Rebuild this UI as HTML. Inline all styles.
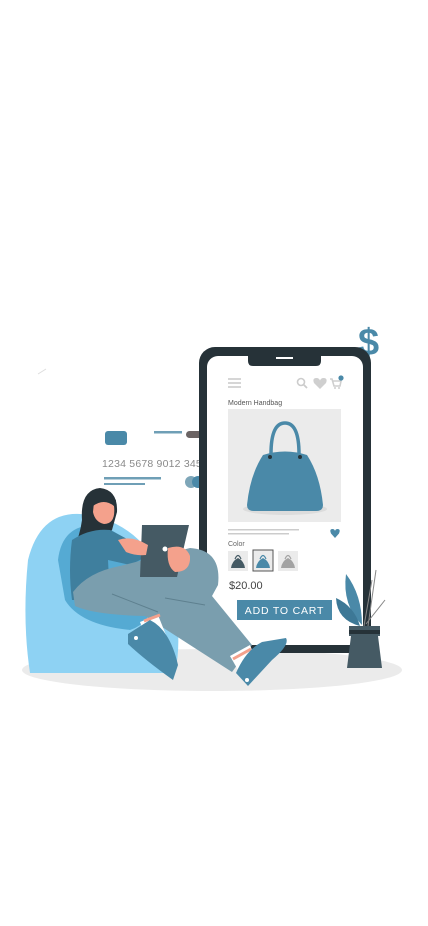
<!DOCTYPE html>
<html><head><meta charset="utf-8"><style>
html,body{margin:0;padding:0;background:#fff;width:428px;height:926px;overflow:hidden}
svg{display:block}
text{font-family:"Liberation Sans",sans-serif}
</style></head><body>
<svg width="428" height="926" viewBox="0 0 428 926" xmlns="http://www.w3.org/2000/svg">
<ellipse cx="212" cy="670" rx="190" ry="21" fill="#ebebeb"/>
<path d="M38 374 L46 369" stroke="#ddd" stroke-width="1"/>
<rect x="105" y="431" width="22" height="14" rx="3" fill="#4a89a8"/>
<rect x="154" y="431" width="28" height="2.5" fill="#6f9fb6"/>
<rect x="186" y="431" width="16" height="7" rx="3.5" fill="#6b6464"/>
<text x="102" y="467" font-size="10.5" fill="#8a8a8a" letter-spacing="0.2">1234  5678  9012  345</text>
<rect x="104" y="477" width="57" height="2.5" fill="#6f9fb6"/>
<rect x="104" y="483" width="41" height="2" fill="#6f9fb6"/>
<circle cx="191" cy="482" r="6" fill="#7ea6b8"/>
<circle cx="198" cy="482" r="6" fill="#4a89a8"/>
<text x="358" y="355" font-size="38" font-weight="bold" fill="#4a89a8">$</text>
<rect x="199" y="347" width="172" height="306" rx="16" fill="#263238"/>
<rect x="207" y="356" width="156" height="289" rx="11" fill="#fff"/>
<path d="M248 353 H321 V361 Q321 366 316 366 H253 Q248 366 248 361 Z" fill="#263238"/>
<rect x="276" y="357" width="17" height="2" fill="#fff"/>
<g fill="#d6d6d6"><rect x="228" y="378" width="13" height="2"/><rect x="228" y="382" width="13" height="2"/><rect x="228" y="386" width="13" height="2"/></g>
<circle cx="301" cy="382" r="3.5" fill="none" stroke="#ccc" stroke-width="1.6"/>
<path d="M303.5 384.5 L307 388" stroke="#ccc" stroke-width="1.8"/>
<path d="M320 389 L314 383 Q312 378 316.5 378 Q319 378 320 380.5 Q321 378 323.5 378 Q328 378 326 383 Z" fill="#cfcfcf"/>
<path d="M330 379 H332 L334 386 H340 L341 381 H333" fill="none" stroke="#cfcfcf" stroke-width="1.6"/>
<circle cx="335" cy="388" r="1" fill="#cfcfcf"/><circle cx="339" cy="388" r="1" fill="#cfcfcf"/>
<circle cx="341" cy="378" r="2.6" fill="#4a89a8"/>
<text x="228" y="405" font-size="7" fill="#555">Modern Handbag</text>
<rect x="228" y="409" width="113" height="113" fill="#ebebeb"/>
<ellipse cx="285" cy="509" rx="42" ry="6" fill="#dcdcdc"/>
<path d="M271 454 Q271 423 285 423 Q299 423 299 454" fill="none" stroke="#4a89a8" stroke-width="3.5"/>
<path d="M263 455 Q285 448 307 455 Q320 475 323 505 Q323 511 316 511 H254 Q247 511 247 505 Q250 475 263 455 Z" fill="#4a89a8"/>
<circle cx="270" cy="457" r="2" fill="#263238"/><circle cx="300" cy="457" r="2" fill="#263238"/>
<rect x="228" y="529" width="71" height="1.5" fill="#ccc"/>
<rect x="228" y="533" width="61" height="1.5" fill="#ccc"/>
<path d="M335 538 L331 533.5 Q329 529 332.5 529 Q334.5 529 335 531 Q335.5 529 337.5 529 Q341 529 339 533.5 Z" fill="#4a89a8"/>
<text x="228" y="546" font-size="7" fill="#666">Color</text>
<rect x="228" y="551" width="20" height="20" fill="#ebebeb"/>
<rect x="253" y="550" width="20" height="21" fill="#ebebeb" stroke="#555" stroke-width="1"/>
<rect x="278" y="551" width="20" height="20" fill="#ebebeb"/>
<path d="M231 568 Q232 561 238 558 Q244 561 245 568 Z" fill="#455a64"/>
<path d="M235 559 Q238 552 241 559" fill="none" stroke="#455a64" stroke-width="1.2"/>
<path d="M256 568 Q257 561 263 558 Q269 561 270 568 Z" fill="#4a89a8"/>
<path d="M260 559 Q263 552 266 559" fill="none" stroke="#4a89a8" stroke-width="1.2"/>
<path d="M281 568 Q282 561 288 558 Q294 561 295 568 Z" fill="#a3a3a3"/>
<path d="M285 559 Q288 552 291 559" fill="none" stroke="#a3a3a3" stroke-width="1.2"/>
<text x="229" y="589" font-size="11" fill="#444">$20.00</text>
<rect x="237" y="600" width="95" height="20" fill="#4a89a8"/>
<text x="284.5" y="614" font-size="10.5" fill="#fff" text-anchor="middle" letter-spacing="0.8">ADD TO CART</text>
<path d="M362 625 Q342 605 346 574 Q362 595 362 625 Z" fill="#4a89a8"/>
<path d="M360 626 Q337 620 336 598 Q354 606 360 626 Z" fill="#3d7896"/>
<path d="M364 626 L372 580 M366 624 L385 600 M368 626 L376 570" stroke="#888" stroke-width="1"/>
<path d="M349 626 H380 V636 H349 Z" fill="#455a64"/>
<rect x="349" y="630" width="31" height="4" fill="#263238"/>
<path d="M351 636 H378 L382 668 H347 Z" fill="#455a64"/>
<!-- beanbag -->
<path d="M28 560 Q40 512 80 514 Q140 520 165 580 Q185 625 175 673 H30 Q22 620 28 560 Z" fill="#8ed2f3"/>
<path d="M58 560 Q62 525 95 525 Q130 530 150 580 Q160 620 130 630 Q80 625 65 600 Z" fill="#55aad3"/>
<!-- woman hair -->
<path d="M82 520 Q80 490 100 488 Q118 490 117 512 L112 530 Q95 545 74 548 Q80 535 82 520 Z" fill="#263238"/>
<path d="M94 502 Q110 497 114 506 Q116 524 104 524 Q95 522 93 512 Z" fill="#f4a18c"/>
<path d="M92 500 Q104 490 116 500 L114 506 Q104 498 93 506 Z" fill="#263238"/>
<!-- shirt -->
<path d="M72 540 Q90 528 110 530 Q140 545 150 555 L130 565 L108 560 L110 600 L72 600 Q68 570 72 540 Z" fill="#3f7f9e"/>
<!-- pants -->
<path d="M73 592 Q88 572 120 566 L190 548 Q222 550 218 585 L212 596 L252 645 L232 672 L145 616 Q95 615 75 606 Z" fill="#7a9eae"/>
<path d="M112 594 L158 612" stroke="#5e808f" stroke-width="1"/>
<path d="M165 598 L205 605" stroke="#5e808f" stroke-width="1"/>
<!-- arms/tablet -->
<path d="M142 525 H189 L177 577 H140 Z" fill="#455a64"/>
<circle cx="165" cy="549" r="2.5" fill="#fff"/>
<path d="M118 540 Q132 535 148 545 L146 555 Q135 556 126 552 Z" fill="#f4a18c"/>
<path d="M168 548 Q185 543 190 556 Q191 572 175 572 Q166 566 168 548 Z" fill="#f4a18c"/>
<!-- socks & shoes -->
<path d="M140 622 L158 615 L168 640 L150 648 Z" fill="#fff"/>
<path d="M144 621 L160 615" stroke="#f4a18c" stroke-width="3"/>
<path d="M128 634 L150 620 Q170 630 178 665 L173 680 Q145 660 128 644 Z" fill="#4a89a8"/>
<circle cx="136" cy="638" r="2" fill="#fff"/>
<path d="M230 656 L250 645 L256 660 L238 670 Z" fill="#fff"/>
<path d="M233 659 L251 649" stroke="#f4a18c" stroke-width="3"/>
<path d="M236 673 Q246 650 262 642 L286 638 Q290 645 272 660 L248 686 Z" fill="#4a89a8"/>
<circle cx="247" cy="680" r="2" fill="#fff"/>
</svg>
</body></html>
